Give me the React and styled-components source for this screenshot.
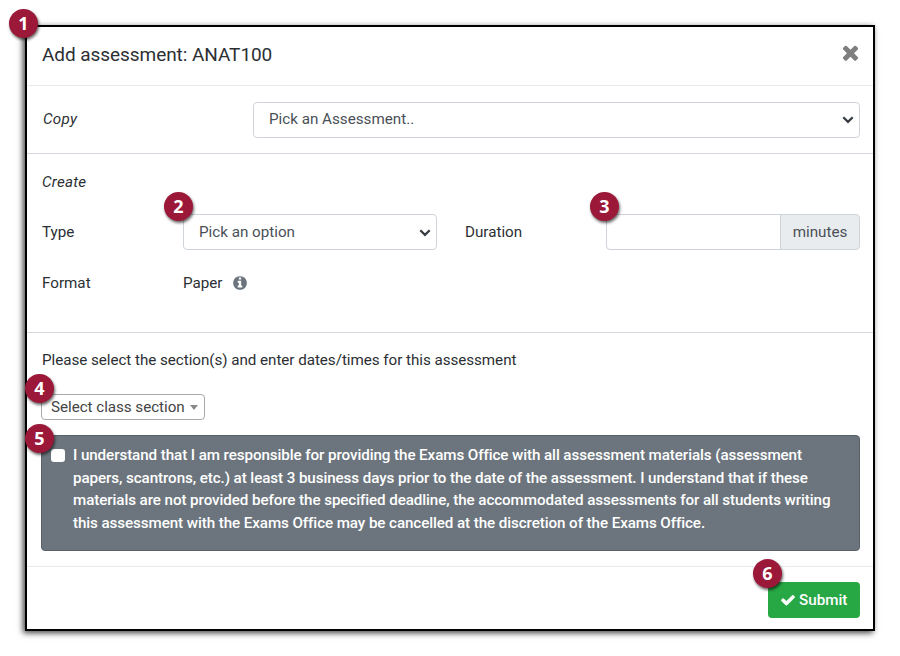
import React from "react";
import styled, { createGlobalStyle } from "styled-components";

const GlobalStyle = createGlobalStyle`
  * {
    box-sizing: border-box;
  }

  body {
    margin: 0;
    background: #fff;
    color: #2b2f33;
    font-family: Roboto, sans-serif;
    font-size: 15.2px;
    line-height: 22.8px;
  }
`;

const TIMES =
  "M1490 1322q0 40-28 68l-136 136q-28 28-68 28t-68-28l-294-294-294 294q-28 28-68 28t-68-28l-136-136q-28-28-28-68t28-68l294-294-294-294q-28-28-28-68t28-68l136-136q28-28 68-28t68 28l294 294 294-294q28-28 68-28t68 28l136 136q28 28 28 68t-28 68l-294 294 294 294q28 28 28 68z";
const CHECK =
  "M1671 566q0 40-28 68l-724 724-136 136q-28 28-68 28t-68-28l-136-136-362-362q-28-28-28-68t28-68l136-136q28-28 68-28t68 28l294 295 656-657q28-28 68-28t68 28l136 136q28 28 28 68z";
const INFO =
  "M1152 1376v-160q0-14-9-23t-23-9h-96v-512q0-14-9-23t-23-9h-320q-14 0-23 9t-9 23v160q0 14 9 23t23 9h96v320h-96q-14 0-23 9t-9 23v160q0 14 9 23t23 9h448q14 0 23-9t9-23zm-128-896v-160q0-14-9-23t-23-9h-192q-14 0-23 9t-9 23v160q0 14 9 23t23 9h192q14 0 23-9t9-23zm640 416q0 209-103 385.500t-279.500 279.500-385.500 103-385.500-103-279.500-279.500-103-385.500 103-385.500 279.500-279.500 385.500-103 385.500 103 279.500 279.500 103 385.500z";

const Icon = ({ path, size }) => (
  <svg width={size} height={size} viewBox="0 0 1792 1792" fill="currentColor">
    <path d={path} />
  </svg>
);

const Chevron = () => (
  <svg width="12" height="8" viewBox="0 0 12 8" fill="none">
    <path d="M1.3 1.3L6 5.9L10.7 1.3" stroke="#343a40" strokeWidth="2.2" />
  </svg>
);

const App = () => {
  return (
    <Page>
      <GlobalStyle />
      <Modal>
        <Badge $x={-18} $y={-18}>1</Badge>
        <Header>
          <Title>Add assessment: ANAT100</Title>
          <CloseButton aria-label="Close">
            <Icon path={TIMES} size={23} />
          </CloseButton>
        </Header>

        <CopySection>
          <Label $width="210px" $italic>Copy</Label>
          <Select $grow>
            Pick an Assessment..
            <Chevron />
          </Select>
        </CopySection>

        <CreateSection>
          <Label $italic>Create</Label>
          <FieldRow>
            <Label $width="141px">Type</Label>
            <Select $low>
              <Badge $x={-20} $y={-23}>2</Badge>
              Pick an option
              <Chevron />
            </Select>
            <DurationLabel>Duration</DurationLabel>
            <InputGroup>
              <Badge $x={-16} $y={-22}>3</Badge>
              <Input aria-label="Duration" />
              <Addon>minutes</Addon>
            </InputGroup>
          </FieldRow>
          <FormatRow>
            <Label $width="141px">Format</Label>
            <span>Paper</span>
            <Info>
              <Icon path={INFO} size={16} />
            </Info>
          </FormatRow>
        </CreateSection>

        <ClassSection>
          <Prompt>
            Please select the section(s) and enter dates/times for this assessment
          </Prompt>
          <Dropdown>
            <Badge $x={-17} $y={-21}>4</Badge>
            Select class section
            <Caret />
          </Dropdown>
          <Notice>
            <Badge $x={-17} $y={-12}>5</Badge>
            <Checkbox type="checkbox" />
            <NoticeText>
              I understand that I am responsible for providing the Exams Office
              with all assessment materials (assessment
              <br />
              papers, scantrons, etc.) at least 3 business days prior to the
              date of the assessment. I understand that if these
              <br />
              materials are not provided before the specified deadline, the
              accommodated assessments for all students writing
              <br />
              this assessment with the Exams Office may be cancelled at the
              discretion of the Exams Office.
            </NoticeText>
          </Notice>
        </ClassSection>

        <Footer>
          <SubmitButton>
            <Badge $x={-15} $y={-23}>6</Badge>
            <Icon path={CHECK} size={16} />
            Submit
          </SubmitButton>
        </Footer>
      </Modal>
    </Page>
  );
};

const Page = styled.div`
  height: 656px;
  padding: 25px;
`;

const Modal = styled.div`
  position: relative;
  display: flex;
  flex-direction: column;
  width: 850px;
  height: 606px;
  border: 2px solid #000;
  background: #fff;
  box-shadow: -2px 2px 6px rgba(0, 0, 0, 0.75);
`;

const Badge = styled.span`
  position: absolute;
  left: ${(props) => props.$x}px;
  top: ${(props) => props.$y}px;
  z-index: 1;
  width: 29px;
  height: 29px;
  border-radius: 50%;
  background: #9b1839;
  box-shadow: 1px 2px 3px rgba(0, 0, 0, 0.6);
  color: #fff;
  font: bold 18px/29px "Open Sans", sans-serif;
  letter-spacing: 0;
  text-align: center;
`;

const Header = styled.header`
  display: flex;
  justify-content: space-between;
  height: 59px;
  padding: 14px 11px 0 15px;
  border-bottom: 1px solid #e9ecef;
`;

const Title = styled.h5`
  margin: 0;
  font-size: 19px;
  font-weight: 400;
  letter-spacing: -0.06px;
  line-height: 27px;
`;

const CloseButton = styled.button`
  display: flex;
  height: 23px;
  padding: 0;
  border: 0;
  background: none;
  color: #7f7f7f;
`;

const CopySection = styled.section`
  display: flex;
  height: 68px;
  padding: 16px 13px 0 16px;
  border-bottom: 1px solid #d5dae0;
`;

const Label = styled.label`
  flex: none;
  width: ${(props) => props.$width || "auto"};
  line-height: 34px;
  font-style: ${(props) => (props.$italic ? "italic" : "normal")};
  letter-spacing: ${(props) => (props.$italic ? "0.25px" : "0")};
`;

const Select = styled.div`
  position: relative;
  display: flex;
  align-items: center;
  justify-content: space-between;
  flex: ${(props) => (props.$grow ? "1" : "none")};
  width: 254px;
  height: 36px;
  padding: ${(props) => (props.$low ? "1px 5px 0 15px" : "0 5px 1px 15px")};
  border: 1px solid #ced4da;
  border-radius: 4px;
  color: #495057;
`;

const CreateSection = styled.section`
  height: 179px;
  padding: 11px 13px 0 15px;
  border-bottom: 1px solid #d5dae0;
`;

const FieldRow = styled.div`
  display: flex;
  margin-top: 15px;

  > label {
    line-height: 36px;
  }
`;

const DurationLabel = styled(Label)`
  width: 169px;
  padding-left: 28px;
`;

const InputGroup = styled.div`
  position: relative;
  display: flex;
  width: 254px;
  height: 36px;
`;

const Input = styled.input`
  flex: 1;
  min-width: 0;
  border: 1px solid #ced4da;
  border-radius: 4px 0 0 4px;
  outline: 0;
`;

const Addon = styled.span`
  width: 80px;
  margin-left: -1px;
  border: 1px solid #ced4da;
  border-radius: 0 4px 4px 0;
  background: #e9ecef;
  color: #495057;
  line-height: 35px;
  text-align: center;
`;

const FormatRow = styled.div`
  display: flex;
  align-items: center;
  margin-top: 16px;
`;

const Info = styled.span`
  display: flex;
  margin-left: 9px;
  color: #6c757d;
`;

const ClassSection = styled.section`
  display: flex;
  flex-direction: column;
  align-items: flex-start;
  height: 233px;
  padding: 16px 13px 0 14px;
`;

const Prompt = styled.p`
  margin: 0 0 22px 1px;
  letter-spacing: -0.04px;
`;

const Dropdown = styled.div`
  position: relative;
  display: flex;
  align-items: center;
  justify-content: space-between;
  width: 164px;
  height: 26px;
  padding: 1px 6px 0 9px;
  border: 1px solid #aaa;
  border-radius: 4px;
  color: #444;
  letter-spacing: -0.04px;
`;

const Caret = styled.span`
  border: 4px solid transparent;
  border-top: 5px solid #888;
  border-bottom: 0;
`;

const Notice = styled.div`
  position: relative;
  display: flex;
  width: 819px;
  height: 116px;
  margin-top: 15px;
  padding: 8px 9px;
  border: 1px solid #596169;
  border-radius: 4px;
  background: #6c757d;
`;

const Checkbox = styled.input`
  flex: none;
  appearance: none;
  width: 14px;
  height: 13px;
  margin: 5px 8px 0 0;
  border-radius: 3px;
  background: #fff;
`;

const NoticeText = styled.div`
  color: #fff;
  font-weight: 500;
  letter-spacing: -0.09px;
  white-space: nowrap;
`;

const Footer = styled.footer`
  display: flex;
  justify-content: flex-end;
  flex: 1;
  padding: 15px 13px 0;
  border-top: 1px solid #e9ecef;
`;

const SubmitButton = styled.button`
  position: relative;
  display: flex;
  align-items: center;
  gap: 3px;
  width: 92px;
  height: 36px;
  padding: 0 0 1px 12px;
  border: 0;
  border-radius: 4px;
  background: #28a745;
  color: #fff;
  font: 500 15.2px Roboto, sans-serif;
`;

export default App;
